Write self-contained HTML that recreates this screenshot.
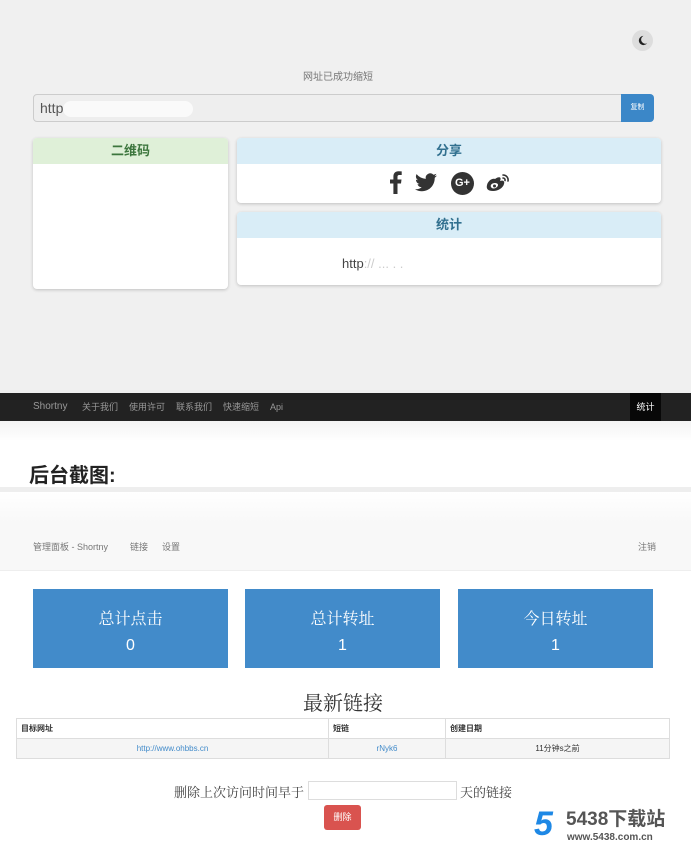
<!DOCTYPE html>
<html><head><meta charset="utf-8"><style>
*{margin:0;padding:0;box-sizing:border-box}
body{width:691px;height:852px;position:relative;background:#fff;font-family:"Liberation Sans","Noto Sans CJK SC",sans-serif;overflow:hidden}
.a{position:absolute}
.card{position:absolute;background:#fff;border-radius:4px;box-shadow:0 1px 3px rgba(0,0,0,.2);overflow:hidden}
.hd{height:26px;line-height:26px;text-align:center;font-weight:bold;font-size:13px}
.sb{position:absolute;top:589px;width:195px;height:79px;background:#428bca;color:#fff;text-align:center;font-family:"Liberation Serif","Noto Serif CJK SC",serif;font-size:16px}
.sb div:first-child{margin-top:17px}
.sb div:last-child{margin-top:8px;font-family:"Liberation Sans",sans-serif}
td{border:1px solid #ddd;font-size:8px;padding:0 4px;height:20px}
</style></head><body>
<div class="a" style="left:0;top:0;width:691px;height:393px;background:#f0f0f0"></div>
<div class="a" style="left:632px;top:30px;width:21px;height:21px;border-radius:50%;background:#ddd"></div>
<svg class="a" style="left:637px;top:35px" width="11" height="11" viewBox="0 0 12 12"><path fill="#222" d="M7 1a5 5 0 1 0 4 8A4 4 0 0 1 7 1z"/></svg>
<div class="a" style="left:0;width:676px;top:68px;text-align:center;font-size:10px;color:#777">网址已成功缩短</div>
<div class="a" style="left:33px;top:94px;width:590px;height:28px;background:#eee;border:1px solid #ccc;border-radius:4px 0 0 4px;font-size:14px;color:#555;line-height:26px;padding-left:6px">http<span style="display:inline-block;width:130px;height:16px;background:#fafafa;vertical-align:middle;border-radius:8px"></span></div>
<div class="a" style="left:621px;top:94px;width:33px;height:28px;background:#3b87c8;border-radius:0 4px 4px 0;color:#fff;font-size:7px;text-align:center;line-height:28px">复制</div>
<div class="card" style="left:33px;top:138px;width:195px;height:151px"><div class="hd" style="background:#dff0d8;color:#3c763d">二维码</div></div>
<div class="card" style="left:237px;top:138px;width:424px;height:65px"><div class="hd" style="background:#d9edf7;color:#31708f">分享</div>
<svg class="a" style="left:152px;top:33px" width="13" height="23" viewBox="0 0 13 23"><path fill="#333" d="M8.5 23V12.5H12l.5-4H8.5V6c0-1.2.3-2 2-2h2.2V.4A29 29 0 0 0 9.5.2C6.4.2 4.4 2 4.4 5.5v3H1v4h3.4V23z"/></svg>
<svg class="a" style="left:178px;top:35px" width="22" height="19" viewBox="0 0 24 20"><path fill="#333" d="M24 2.4a10 10 0 0 1-2.8.8A5 5 0 0 0 23.3.4a10 10 0 0 1-3.1 1.2A4.9 4.9 0 0 0 11.8 6 14 14 0 0 1 1.7.9a4.9 4.9 0 0 0 1.5 6.6A4.9 4.9 0 0 1 1 6.9a4.9 4.9 0 0 0 3.9 4.8 5 5 0 0 1-2.2.1 4.9 4.9 0 0 0 4.6 3.4A9.9 9.9 0 0 1 0 17.3 14 14 0 0 0 7.5 19.5c9.1 0 14-7.5 14-14v-.6A10 10 0 0 0 24 2.4z"/></svg>
<div class="a" style="left:214px;top:34px;width:23px;height:23px;border-radius:50%;background:#333;color:#fff;font-size:11px;font-weight:bold;text-align:center;line-height:23px">G+</div>
<svg class="a" style="left:249px;top:35px" width="24" height="20" viewBox="0 0 24 20"><path fill="#333" d="M9 6c4-3 7-2 5 2 3-1 5 0 4 3-1 4-6 7-11 7S0 16 1 12s5-7 8-6zm0 4c-3 0-5 2-4 4s4 2 6 0 1-4-2-4z"/><circle cx="8.5" cy="13" r="1.5" fill="#333"/><path d="M17 2a5 5 0 0 1 5 6M17 5a2 2 0 0 1 2 2.5" stroke="#333" stroke-width="1.6" fill="none" stroke-linecap="round"/></svg></div>
<div class="card" style="left:237px;top:212px;width:424px;height:73px"><div class="hd" style="background:#d9edf7;color:#31708f">统计</div>
<div class="a" style="left:105px;top:44px;font-size:13px;color:#444">http<span style="color:#ccc">:// ... . .</span></div></div>
<div class="a" style="left:0;top:393px;width:691px;height:28px;background:#222;font-size:9px;color:#999;line-height:28px">
<span class="a" style="left:33px;font-size:10px">Shortny</span><span class="a" style="left:82px">关于我们</span><span class="a" style="left:129px">使用许可</span><span class="a" style="left:176px">联系我们</span><span class="a" style="left:223px">快速缩短</span><span class="a" style="left:270px">Api</span>
<span class="a" style="left:630px;width:31px;height:28px;background:#080808;color:#fff;text-align:center">统计</span></div>
<div class="a" style="left:0;top:421px;width:691px;height:20px;background:linear-gradient(#f3f3f3,#fff)"></div>
<div class="a" style="left:29px;top:459px;font-size:20px;font-weight:bold;color:#222">后台截图:</div>
<div class="a" style="left:0;top:487px;width:691px;height:5px;background:#eee"></div>
<div class="a" style="left:0;top:492px;width:691px;height:79px;background:linear-gradient(#fff,#f8f8f8 40%);border-bottom:1px solid #eee;font-size:9px;color:#777">
<span class="a" style="left:33px;top:48px">管理面板 - Shortny</span><span class="a" style="left:130px;top:48px">链接</span><span class="a" style="left:162px;top:48px">设置</span><span class="a" style="left:638px;top:48px">注销</span></div>
<div class="sb" style="left:33px"><div>总计点击</div><div>0</div></div>
<div class="sb" style="left:245px"><div>总计转址</div><div>1</div></div>
<div class="sb" style="left:458px"><div>今日转址</div><div>1</div></div>
<div class="a" style="left:0;width:686px;top:687px;text-align:center;font-size:20px;color:#333;font-family:'Liberation Serif','Noto Serif CJK SC',serif">最新链接</div>
<table class="a" style="left:16px;top:718px;width:654px;border-collapse:collapse;color:#333">
<tr><td style="width:312px;font-weight:bold">目标网址</td><td style="width:117px;font-weight:bold">短链</td><td style="font-weight:bold">创建日期</td></tr>
<tr style="background:#f5f5f5;text-align:center"><td style="color:#428bca">http://www.ohbbs.cn</td><td style="color:#428bca">rNyk6</td><td>11分钟s之前</td></tr></table>
<div class="a" style="left:174px;top:782px;font-size:13px;color:#444;font-family:'Liberation Serif','Noto Serif CJK SC',serif">删除上次访问时间早于</div>
<div class="a" style="left:308px;top:781px;width:149px;height:19px;border:1px solid #ddd;background:#fff"></div>
<div class="a" style="left:460px;top:782px;font-size:13px;color:#444;font-family:'Liberation Serif','Noto Serif CJK SC',serif">天的链接</div>
<div class="a" style="left:324px;top:805px;width:37px;height:25px;background:#d9534f;border-radius:3px;color:#fff;font-size:9px;text-align:center;line-height:25px">删除</div>
<div class="a" style="left:534px;top:806px;font-size:34px;font-weight:bold;color:#1e88e5;font-style:italic;line-height:36px">5</div>
<div class="a" style="left:566px;top:809px;font-size:19px;color:#555;font-weight:bold;line-height:22px">5438下载站</div>
<div class="a" style="left:567px;top:832px;font-size:10px;color:#555;font-weight:bold">www.5438.com.cn</div>
</body></html>
